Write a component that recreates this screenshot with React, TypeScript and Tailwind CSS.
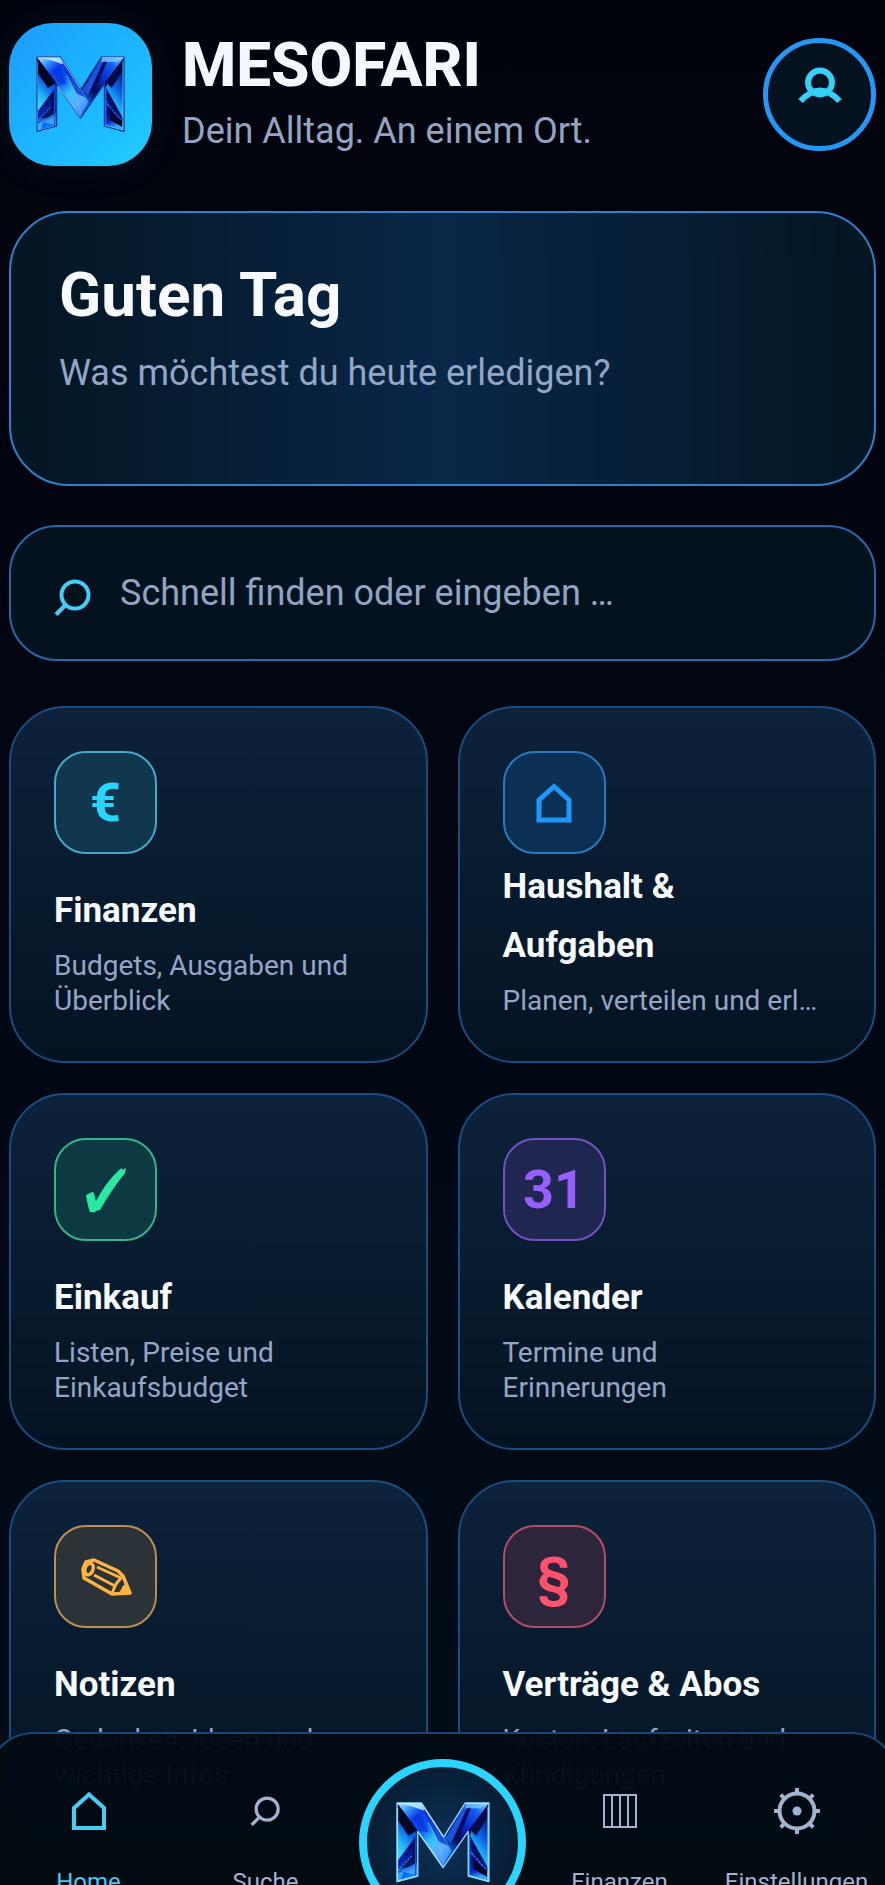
import { useId, type ReactNode } from "react";

function LogoMark({ className, edge }: { className: string; edge: string }) {
  const id = useId();
  const ref = (name: string) => `url(#${id}${name})`;
  return (
    <svg viewBox="0 0 268 230" className={className} aria-hidden="true">
      <defs>
        <linearGradient id={`${id}band`} x1="0" y1="0" x2="0.8" y2="1">
          <stop offset="0" stopColor="#bff2ff" />
          <stop offset="0.14" stopColor="#3ea3ff" />
          <stop offset="0.3" stopColor="#0a3be8" />
          <stop offset="0.48" stopColor="#0a58f2" />
          <stop offset="0.66" stopColor="#2fc4ff" />
          <stop offset="0.84" stopColor="#5fb8ff" />
          <stop offset="1" stopColor="#0a5cf0" />
        </linearGradient>
        <linearGradient id={`${id}back`} x1="1" y1="0" x2="0.1" y2="1">
          <stop offset="0" stopColor="#8fe6ff" />
          <stop offset="0.2" stopColor="#1660f5" />
          <stop offset="0.45" stopColor="#0828c8" />
          <stop offset="0.65" stopColor="#020a4a" />
          <stop offset="0.85" stopColor="#1264f0" />
          <stop offset="1" stopColor="#0626a8" />
        </linearGradient>
        <linearGradient id={`${id}dark`} x1="0" y1="0" x2="0.3" y2="1">
          <stop offset="0" stopColor="#061a78" />
          <stop offset="0.35" stopColor="#01031c" />
          <stop offset="0.7" stopColor="#0536c4" />
          <stop offset="1" stopColor="#0a7bff" />
        </linearGradient>
        <linearGradient id={`${id}ice`} x1="0.6" y1="0" x2="0.2" y2="1">
          <stop offset="0" stopColor="#04188a" />
          <stop offset="0.4" stopColor="#0a62e6" />
          <stop offset="0.7" stopColor="#22b8f8" />
          <stop offset="1" stopColor="#3fdcff" />
        </linearGradient>
        <linearGradient id={`${id}foot`} x1="0" y1="0" x2="0.2" y2="1">
          <stop offset="0" stopColor="#0b45f0" />
          <stop offset="0.4" stopColor="#020a60" />
          <stop offset="0.75" stopColor="#0828c0" />
          <stop offset="1" stopColor="#3aa8ff" />
        </linearGradient>
      </defs>

      <path d="M3 3 L3 227 L61 211 L63 82 Z" fill={ref("dark")} />
      <path d="M4 24 L50 78 L60 92 L4 168 Z" fill={ref("ice")} />
      <path d="M4 6 L60 80 L36 96 L5 52 Z" fill="#020725" />
      <path d="M60 90 L30 136 L6 168 L6 196 L60 208 Z" fill={ref("foot")} />
      <path d="M60 92 L60 172 L34 186 L10 190 L44 152 Z" fill="#03104f" opacity="0.85" />
      <path d="M6 196 L46 152" stroke="#2a9df0" strokeWidth="3" strokeDasharray="7 3" />
      <path d="M5 203 L22 197 L14 224 L5 226 Z" fill="#2fa9ff" />
      <path d="M4 18 L4 226 L60 211" fill="none" stroke="#a8f1ff" strokeWidth="4" />
      <path d="M57 94 L56 210" stroke="#1554d8" strokeWidth="4" />

      <path d="M265 3 L265 227 L206 211 L205 82 Z" fill={ref("dark")} />
      <path d="M262 20 L262 184 L210 96 L216 78 Z" fill={ref("ice")} />
      <path d="M262 8 L210 78 L228 96 L258 50 Z" fill="#020b48" />
      <path d="M209 92 L262 190 L262 200 L238 176 L209 150 Z" fill="#03105e" />
      <path d="M209 128 L262 196 L262 222 L209 206 Z" fill={ref("foot")} />
      <path d="M214 144 L256 192" stroke="#2a9bff" strokeWidth="3" strokeDasharray="8 3" />
      <path d="M222 164 L260 196 L260 214 L222 192 Z" fill="#010730" />
      <path d="M263 14 L263 225 L207 210" fill="none" stroke="#8ee9ff" strokeWidth="4" />
      <path d="M210 94 L210 208" stroke="#1c6eff" strokeWidth="4" />

      <path d="M265 3 L197 3 L136 100 L134 187 L206 82 Z" fill={ref("back")} />
      <path d="M194 14 L206 10 L158 118 L140 104 Z" fill="#1a54d8" />
      <path d="M206 10 L214 16 L182 92 L158 116 Z" fill="#020c58" />
      <path d="M200 5 L262 5 L240 18 L196 18 Z" fill="#7cd0ff" opacity="0.75" />

      <path d="M3 3 L73 3 L136 100 L158 138 L134 187 L63 82 Z" fill={ref("band")} />
      <path d="M10 5 L72 5 L84 26 L44 12 Z" fill="#c4f3ff" opacity="0.85" />
      <path d="M76 10 L136 102 L150 126 L120 112 L92 58 Z" fill="#0a2fd0" opacity="0.75" />
      <path d="M92 58 L120 112 L136 174" fill="none" stroke="#7fe3ff" strokeWidth="2" />
      <path d="M120 110 L156 138 L135 182 L108 142 Z" fill="#5aa9ff" opacity="0.6" />
      <path d="M50 40 L72 34 L92 86 L70 84 Z" fill="#0630d8" opacity="0.6" />
      <path
        d="M3 3 H73 L136 100 L197 3 H265 V227 L206 211 V84 L134 187 L62 84 V211 L3 227 Z"
        fill="none"
        stroke={edge}
        strokeWidth="4"
        strokeLinejoin="round"
      />
      <path d="M4 4 H72 L134 98 M198 4 H264 M66 90 L134 184" fill="none" stroke="#d3f7ff" strokeWidth="2" />
    </svg>
  );
}

function SearchGlyph({ className, stroke }: { className: string; stroke: number }) {
  return (
    <svg viewBox="0 0 38 38" className={className} fill="none" stroke="currentColor" strokeWidth={stroke} aria-hidden="true">
      <circle cx="21" cy="16" r="13.500" />
      <path d="M11.5 26 L2 35.5" />
    </svg>
  );
}

function HouseGlyph({ className, stroke }: { className: string; stroke: number }) {
  return (
    <svg viewBox="0 0 40 42" className={className} fill="none" stroke="currentColor" strokeWidth={stroke} aria-hidden="true">
      <path d="M5 18 L20 4.5 L35 18 V38 H5 Z" />
    </svg>
  );
}

function CheckGlyph() {
  return (
    <svg viewBox="0 0 44 46" className="h-[46px] w-11" fill="currentColor" aria-hidden="true">
      <path d="M2 28 L8 25 L10 26 Q11 31 12 34 Q22 15 35 3 L38 1 L38 3 L42 1 L41 6 Q28 22 16 43 L12 44 L11 45.500 L6 45 Q3 37 2 28 Z" />
    </svg>
  );
}

function PencilGlyph() {
  return (
    <svg viewBox="0 0 52 38" className="h-[38px] w-[52px]" fill="none" stroke="currentColor" strokeWidth="3.500" strokeLinejoin="round" aria-hidden="true">
      <path d="M3 11 L6 4 L14 2 L38 13 L43 18 L50 35 L32 36 L4 20 Z" />
      <ellipse cx="9" cy="11" rx="4" ry="6" transform="rotate(20 9 11)" />
      <path d="M17 9 L41 20 L36 26 L32 35" strokeWidth="3" />
      <path d="M14 17 L35 28" strokeWidth="3" />
      <path d="M44 28 L50 35 L40 35.500 Z" fill="currentColor" strokeWidth="2" />
    </svg>
  );
}

function ColumnsGlyph() {
  return (
    <svg viewBox="0 0 34 34" className="h-[34px] w-[34px]" fill="none" stroke="currentColor" strokeWidth="2" aria-hidden="true">
      <path d="M1 1 H33 V33 H1 Z M9 1 V33 M17 1 V33 M25 1 V33" />
    </svg>
  );
}

function GearGlyph() {
  return (
    <svg viewBox="0 0 46 46" className="h-[46px] w-[46px]" fill="none" stroke="currentColor" strokeWidth="4" aria-hidden="true">
      <circle cx="23" cy="23" r="17.500" />
      <circle cx="23" cy="23" r="4.500" fill="currentColor" stroke="none" />
      <path d="M23 0 V6 M23 40 V46 M0 23 H6 M40 23 H46 M6.700 6.700 L11 11 M35 35 L39.300 39.300 M39.300 6.700 L35 11 M11 35 L6.700 39.300" />
    </svg>
  );
}

function ProfileGlyph() {
  return (
    <svg viewBox="0 0 44 38" className="h-[38px] w-11" fill="none" stroke="currentColor" aria-hidden="true">
      <circle cx="22" cy="16.500" r="12" strokeWidth="6" />
      <path d="M2.500 35 Q22 14 41.500 35" strokeWidth="6" />
    </svg>
  );
}

type Tile = { title: string; text: string; tone: string; icon: ReactNode };

const tiles: Tile[] = [
  { title: "Finanzen", text: "Budgets, Ausgaben und Überblick", tone: "border-[#46a9c8] bg-[#10374e] text-[#2bd4ff]", icon: "€" },
  { title: "Haushalt & Aufgaben", text: "Planen, verteilen und erl…", tone: "border-[#2c79bd] bg-[#0c2f54] text-[#1e97fb]", icon: <HouseGlyph className="h-[42px] w-10" stroke={5} /> },
  { title: "Einkauf", text: "Listen, Preise und Einkaufsbudget", tone: "border-[#38b28a] bg-[#0d3942] text-[#28e8a2]", icon: <CheckGlyph /> },
  { title: "Kalender", text: "Termine und Erinnerungen", tone: "border-[#7550c0] bg-[#1f2650] text-[#985fff]", icon: "31" },
  { title: "Notizen", text: "Gedanken, Ideen und wichtige Infos", tone: "border-[#ba9050] bg-[#2b3238] text-[#ffb43f]", icon: <PencilGlyph /> },
  { title: "Verträge & Abos", text: "Kosten, Laufzeiten und Kündigungen", tone: "border-[#b34d66] bg-[#2c253b] text-[#ff526c]", icon: "§" },
];

function TileCard({ title, text, tone, icon }: Tile) {
  return (
    <a
      href={`#${title}`}
      className="flex min-h-[357px] flex-col justify-between rounded-[56px] border-2 border-[#1b4c80] bg-linear-to-b from-[#0d223b] to-[#041322] px-[43px] pt-[43px] pb-[43px]"
    >
      <span className={`flex h-[103px] w-[103px] shrink-0 items-center justify-center rounded-[32px] border-2 text-[54px] leading-none font-bold ${tone}`}>
        {icon}
      </span>
      <span className="flex flex-col gap-2">
        <span className="max-w-[280px] text-[35px] leading-[59px] font-bold text-[#f6f9ff]">{title}</span>
        <span className="line-clamp-2 max-w-[320px] text-[28px] leading-[35px] text-[#95a6c4]">{text}</span>
      </span>
    </a>
  );
}

function NavItem({ label, active, children }: { label: string; active?: boolean; children: ReactNode }) {
  return (
    <a
      href={`#${label}`}
      className={`flex flex-col items-center gap-[31px] pt-[53px] text-[24px] leading-8 ${active ? "text-[#45cdf2]" : "text-[#a3b2cf]"}`}
    >
      <span className="flex h-12 items-center justify-center">{children}</span>
      {label}
    </a>
  );
}

export default function App() {
  return (
    <div className="relative h-screen overflow-hidden bg-linear-to-b from-[#01030c] to-[#020d18] font-[Roboto,sans-serif]">
      <main className="flex h-full flex-col overflow-y-auto px-[9px] pt-[23px] pb-48 [scrollbar-width:none]">
        <header className="flex shrink-0 items-center">
          <div className="flex h-[143px] w-[143px] shrink-0 items-center justify-center rounded-[44px] bg-linear-to-br from-[#1c9cff] to-[#22ccff] shadow-[0_0_36px_rgba(20,130,160,0.12)]">
            <LogoMark className="w-[89px]" edge="#0f3c9c" />
          </div>
          <div className="ml-[30px] flex grow flex-col gap-1.5 pb-1.5">
            <h1 className="text-[62px] leading-[72px] font-extrabold text-[#f6f8ff]">MESOFARI</h1>
            <p className="text-[36px] leading-[48px] text-[#93a4c3]">Dein Alltag. An einem Ort.</p>
          </div>
          <button
            type="button"
            aria-label="Profil"
            className="flex h-[113px] w-[113px] shrink-0 items-center justify-center rounded-full border-5 border-[#2496f3] bg-[#041220] pb-5 text-[#36cff5]"
          >
            <ProfileGlyph />
          </button>
        </header>

        <section className="mt-[45px] flex min-h-[275px] shrink-0 flex-col gap-[18px] rounded-[60px] border-2 border-[#2f80c9] bg-linear-to-r from-[#041522] via-[#0a2748] to-[#041522] px-12 pt-[46px]">
          <h2 className="text-[62px] leading-[72px] font-bold text-[#f6f9ff]">Guten Tag</h2>
          <p className="text-[36px] leading-[48px] text-[#92a7c8]">Was möchtest du heute erledigen?</p>
        </section>

        <label className="mt-[39px] flex h-[136px] shrink-0 items-center gap-7 rounded-[48px] border-2 border-[#2867a8] bg-[#041220] px-[43px] text-[#45cdf2]">
          <SearchGlyph className="mt-2.5 h-[38px] w-[38px] shrink-0" stroke={4} />
          <input
            type="text"
            aria-label="Schnell finden oder eingeben"
            placeholder="Schnell finden oder eingeben …"
            className="w-full min-w-0 bg-transparent text-[36px] leading-[48px] text-[#f6f9ff] outline-none placeholder:text-[#93a4c3]"
          />
        </label>

        <section className="mt-[45px] grid shrink-0 grid-cols-2 gap-[30px]">
          {tiles.map((tile) => (
            <TileCard key={tile.title} {...tile} />
          ))}
        </section>
      </main>

      <nav className="absolute inset-x-0 -bottom-[47px] -mx-3.5 grid h-[200px] grid-cols-5 items-start rounded-t-[48px] border-2 border-[#154676] bg-[#020a13]/97 px-3">
        <NavItem label="Home" active>
          <HouseGlyph className="h-[42px] w-10" stroke={4} />
        </NavItem>
        <NavItem label="Suche">
          <SearchGlyph className="h-[31px] w-[31px]" stroke={4} />
        </NavItem>
        <button
          type="button"
          aria-label="MESOFARI"
          className="mt-[25px] flex h-[167px] w-[167px] items-center justify-center justify-self-center rounded-full border-8 border-[#2bd4ff] bg-radial from-[#0c3158] to-[#061626]"
        >
          <LogoMark className="w-[94px]" edge="#8fd4ff" />
        </button>
        <NavItem label="Finanzen">
          <ColumnsGlyph />
        </NavItem>
        <NavItem label="Einstellungen">
          <GearGlyph />
        </NavItem>
      </nav>
    </div>
  );
}
